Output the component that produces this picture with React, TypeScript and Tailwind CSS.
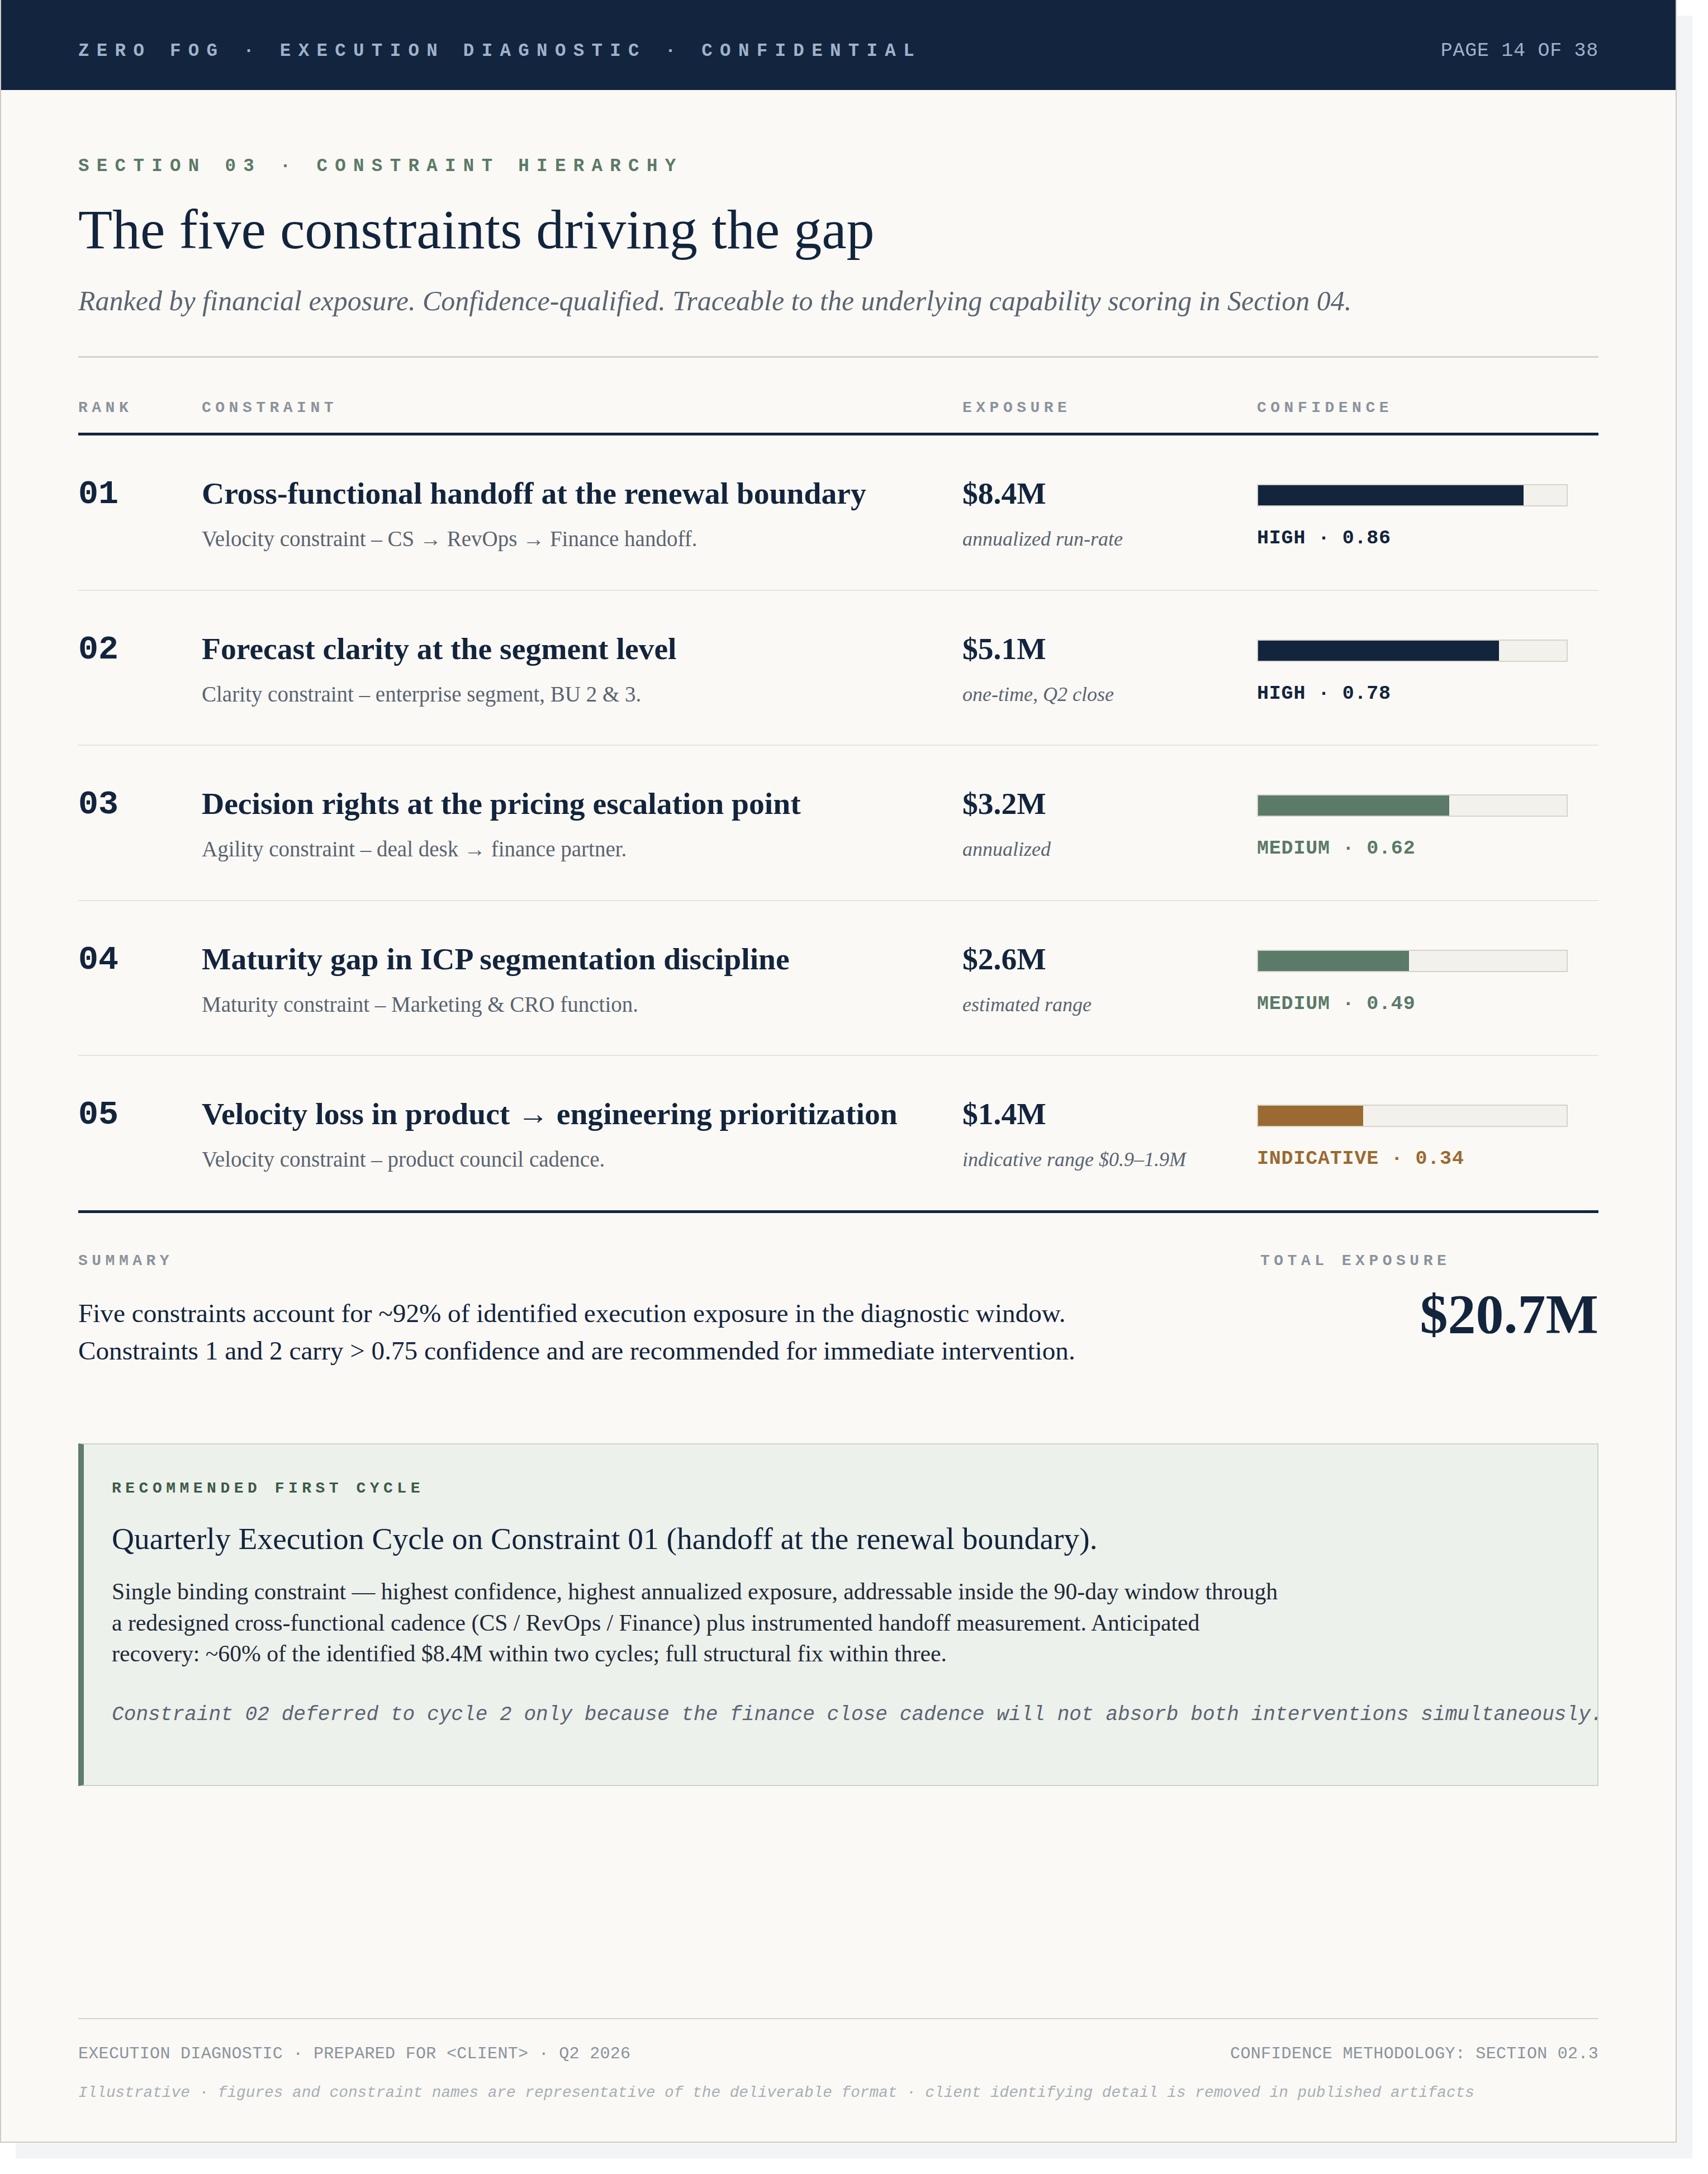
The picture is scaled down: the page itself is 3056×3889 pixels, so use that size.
const serif = "font-['Liberation_Serif','Times_New_Roman',serif]";
const mono = "font-['Liberation_Mono','Courier_New',monospace]";

type Tone = 'high' | 'medium' | 'indicative';

const tones: Record<Tone, { bar: string; text: string }> = {
  high: { bar: 'bg-[#13243d]', text: 'text-[#13243d]' },
  medium: { bar: 'bg-[#5b7a68]', text: 'text-[#5b7a68]' },
  indicative: { bar: 'bg-[#9a6a32]', text: 'text-[#9a6a32]' },
};

const constraints: {
  rank: string;
  title: string;
  detail: string;
  amount: string;
  basis: string;
  level: string;
  score: number;
  tone: Tone;
}[] = [
  {
    rank: '01',
    title: 'Cross-functional handoff at the renewal boundary',
    detail: 'Velocity constraint – CS → RevOps → Finance handoff.',
    amount: '$8.4M',
    basis: 'annualized run-rate',
    level: 'HIGH',
    score: 0.86,
    tone: 'high',
  },
  {
    rank: '02',
    title: 'Forecast clarity at the segment level',
    detail: 'Clarity constraint – enterprise segment, BU 2 & 3.',
    amount: '$5.1M',
    basis: 'one-time, Q2 close',
    level: 'HIGH',
    score: 0.78,
    tone: 'high',
  },
  {
    rank: '03',
    title: 'Decision rights at the pricing escalation point',
    detail: 'Agility constraint – deal desk → finance partner.',
    amount: '$3.2M',
    basis: 'annualized',
    level: 'MEDIUM',
    score: 0.62,
    tone: 'medium',
  },
  {
    rank: '04',
    title: 'Maturity gap in ICP segmentation discipline',
    detail: 'Maturity constraint – Marketing & CRO function.',
    amount: '$2.6M',
    basis: 'estimated range',
    level: 'MEDIUM',
    score: 0.49,
    tone: 'medium',
  },
  {
    rank: '05',
    title: 'Velocity loss in product → engineering prioritization',
    detail: 'Velocity constraint – product council cadence.',
    amount: '$1.4M',
    basis: 'indicative range $0.9–1.9M',
    level: 'INDICATIVE',
    score: 0.34,
    tone: 'indicative',
  },
];

function Label({ children, className = '' }: { children: React.ReactNode; className?: string }) {
  return (
    <div className={`${mono} text-[28px] leading-[42px] font-bold tracking-[7.5px] uppercase ${className}`}>
      {children}
    </div>
  );
}

function ConstraintRow({ row, last }: { row: (typeof constraints)[number]; last: boolean }) {
  const tone = tones[row.tone];
  return (
    <div
      className={`grid grid-cols-[161px_1fr_467px_611px] gap-x-[60px] pt-[70px] pb-[65.5px] ${
        last ? '' : 'border-b-2 border-[#e7e4dd]'
      }`}
    >
      <div className={`${mono} text-[60px] leading-[70px] font-bold text-[#13243d]`}>{row.rank}</div>
      <div>
        <div className={`${serif} text-[55.6px] leading-[66px] font-bold text-[#13243d]`}>{row.title}</div>
        <div className={`${serif} mt-[24px] text-[39px] leading-[50px] text-[#5b6472]`}>{row.detail}</div>
      </div>
      <div>
        <div className={`${serif} text-[55.6px] leading-[66px] font-bold text-[#13243d]`}>{row.amount}</div>
        <div className={`${serif} mt-[24px] text-[36px] leading-[50px] italic text-[#5b6472]`}>{row.basis}</div>
      </div>
      <div>
        <div className="mt-[17px] h-[40px] w-[556px] border-2 border-[#d6d3c9] bg-[#f2f1ec]">
          <div className={`h-full ${tone.bar}`} style={{ width: `${row.score * 100}%` }} />
        </div>
        <div className={`${mono} mt-[37px] text-[35px] leading-[40px] font-bold tracking-[0.8px] ${tone.text}`}>
          {row.level} · {row.score.toFixed(2)}
        </div>
      </div>
    </div>
  );
}

export default function App() {
  return (
    <div className="min-h-screen bg-white">
      <div className="flex h-[3833px] w-[3000px] flex-col border-x-2 border-b-2 border-[#cfccbf] bg-[#faf9f5] shadow-[28px_28px_0_0_#f3f4f6]">
        <header className="flex h-[161px] items-baseline justify-between bg-[#12243e] px-[138px] pt-[67px]">
          <div className={`${mono} text-[32.5px] leading-[49px] font-bold tracking-[13.3px] text-[#9fb2ca]`}>
            ZERO FOG · EXECUTION DIAGNOSTIC · CONFIDENTIAL
          </div>
          <div className={`${mono} text-[35px] leading-[49px] tracking-[0.7px] text-[#9fb2ca]`}>PAGE 14 OF 38</div>
        </header>

        <main className="px-[138px] pt-[112px]">
          <div className={`${mono} text-[32.5px] leading-[49px] font-bold tracking-[13.3px] text-[#5b7a67]`}>
            SECTION 03 · CONSTRAINT HIERARCHY
          </div>
          <h1 className={`${serif} mt-[31px] text-[100px] leading-[115px] font-normal text-[#13243d]`}>
            The five constraints driving the gap
          </h1>
          <p className={`${serif} mt-[35px] text-[50px] leading-[70px] italic text-[#5b6472]`}>
            Ranked by financial exposure. Confidence-qualified. Traceable to the underlying capability scoring in
            Section 04.
          </p>

          <div className="mt-[64px] border-t-[3px] border-[#d6d3c9]" />

          <div className="grid grid-cols-[161px_1fr_467px_611px] gap-x-[60px] border-b-[5px] border-[#13243d] pt-[68.5px] pb-[23.5px] text-[#8b939d]">
            <Label>Rank</Label>
            <Label>Constraint</Label>
            <Label>Exposure</Label>
            <Label>Confidence</Label>
          </div>

          <div className="border-b-[5px] border-[#13243d]">
            {constraints.map((row, i) => (
              <ConstraintRow key={row.rank} row={row} last={i === constraints.length - 1} />
            ))}
          </div>

          <div className="grid grid-cols-[1fr_605px] gap-x-[66px] pt-[65px]">
            <div>
              <Label className="text-[#8b939d]">Summary</Label>
              <p className={`${serif} mt-[39px] text-[47.2px] leading-[67.5px] text-[#13243d]`}>
                Five constraints account for ~92% of identified execution exposure in the diagnostic window.
                <br />
                Constraints 1 and 2 carry &gt; 0.75 confidence and are recommended for immediate intervention.
              </p>
            </div>
            <div>
              <Label className="text-[#8b939d]">Total exposure</Label>
              <div className={`${serif} mt-[24px] text-right text-[100px] leading-[100px] font-bold text-[#13243d]`}>
                $20.7M
              </div>
            </div>
          </div>

          <div className="mt-[131px] border-2 border-l-[10px] border-[#c9d4ca] border-l-[#5e7d6c] bg-[#edf1ec] pt-[58.5px] pr-[50px] pb-[98px] pl-[50px]">
            <Label className="text-[#3d5a48]">Recommended first cycle</Label>
            <div className={`${serif} mt-[33px] text-[55.5px] leading-[72px] text-[#13243d]`}>
              Quarterly Execution Cycle on Constraint 01 (handoff at the renewal boundary).
            </div>
            <p className={`${serif} mt-[31px] max-w-[2100px] text-[41.7px] leading-[55.5px] text-[#1f2a38]`}>
              Single binding constraint — highest confidence, highest annualized exposure, addressable inside the
              90-day window through a redesigned cross-functional cadence (CS / RevOps / Finance) plus instrumented
              handoff measurement. Anticipated recovery: ~60% of the identified $8.4M within two cycles; full
              structural fix within three.
            </p>
            <p className={`${mono} mt-[54px] whitespace-nowrap text-[36.15px] leading-[54px] italic text-[#5b6472]`}>
              Constraint 02 deferred to cycle 2 only because the finance close cadence will not absorb both
              interventions simultaneously.
            </p>
          </div>
        </main>

        <footer className="mx-[138px] mt-auto border-t-2 border-[#d6d3c9] pt-[40px] pb-[67px]">
          <div className={`${mono} flex justify-between text-[30px] leading-[45px] tracking-[0.3px] text-[#8b939d]`}>
            <span>EXECUTION DIAGNOSTIC · PREPARED FOR &lt;CLIENT&gt; · Q2 2026</span>
            <span>CONFIDENCE METHODOLOGY: SECTION 02.3</span>
          </div>
          <div className={`${mono} mt-[26px] text-[27.75px] leading-[41px] italic text-[#a8aeb6]`}>
            Illustrative · figures and constraint names are representative of the deliverable format · client
            identifying detail is removed in published artifacts
          </div>
        </footer>
      </div>
    </div>
  );
}
